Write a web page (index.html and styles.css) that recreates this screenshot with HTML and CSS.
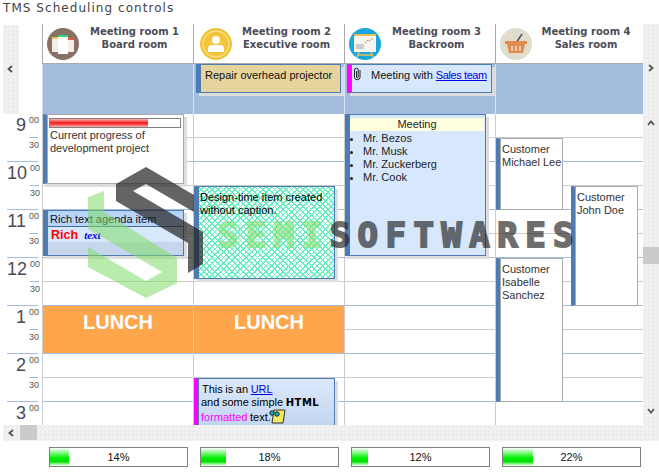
FILE: index.html
```html
<!DOCTYPE html>
<html lang="en">
<head>
  <meta charset="UTF-8">
  <title>TMS Scheduling controls</title>
  <link rel="stylesheet" href="styles.css">
</head>
<body>
  <h1 class="title">TMS Scheduling controls</h1>

  <div class="planner">
    <div class="strip strip-left">
      <svg class="arrow" viewBox="0 0 8 8"><path d="M6 1 L2.500 4 L6 7"/></svg>
    </div>
    <div class="corner"></div>

    <div class="room">
      <svg class="room-icon" viewBox="0 0 32 32">
        <circle cx="16" cy="16" r="16" fill="#8a7064"/>
        <rect x="5" y="9" width="8" height="15" fill="#f4efe6"/>
        <rect x="5" y="9" width="8" height="2" fill="#e8c65a"/>
        <rect x="20" y="10" width="7" height="14" fill="#f4efe6"/>
        <rect x="20" y="10" width="7" height="2" fill="#e0603c"/>
        <rect x="11" y="7" width="10" height="19" fill="#fff"/>
        <rect x="11" y="7" width="10" height="2" fill="#35d07a"/>
      </svg>
      <div class="room-name">Meeting room 1<br>Board room</div>
    </div>
    <div class="room">
      <svg class="room-icon room-icon-2" viewBox="0 0 32 32">
        <circle cx="16" cy="16" r="16" fill="#f2c53c"/>
        <circle cx="16" cy="16" r="13" fill="none" stroke="#f9e7a8" stroke-width="1"/>
        <circle cx="16" cy="12" r="4" fill="#fff"/>
        <path d="M8 24 V21 Q8 17 12 17 H20 Q24 17 24 21 V24 Z" fill="#fff"/>
      </svg>
      <div class="room-name">Meeting room 2<br>Executive room</div>
    </div>
    <div class="room">
      <svg class="room-icon" viewBox="0 0 32 32">
        <circle cx="16" cy="16" r="16" fill="#19a6df"/>
        <path d="M10 24 L8 29 M22 24 L24 29 M8 27 H24" stroke="#e9bd55" stroke-width="1.500" fill="none"/>
        <rect x="5" y="8" width="22" height="16" fill="#f7f7f2"/>
        <rect x="5" y="6" width="22" height="2" fill="#e9bd55"/>
        <rect x="7" y="16" width="8" height="5" fill="#c9ccd0"/>
        <path d="M16 15 L19 12 L21 13 L24 10" stroke="#e0564c" stroke-width="1" stroke-dasharray="1.500 1" fill="none"/>
      </svg>
      <div class="room-name">Meeting room 3<br>Backroom</div>
    </div>
    <div class="room">
      <svg class="room-icon" viewBox="0 0 32 32">
        <circle cx="16" cy="16" r="16" fill="#e1ddcd"/>
        <path d="M16 15 L22 6" stroke="#4a5160" stroke-width="1.500"/>
        <path d="M5 13 H27 V16 H5 Z M7 16 H25 L23 25 H9 Z" fill="#e08a4e"/>
        <path d="M12 18 V23 M16 18 V23 M20 18 V23" stroke="#f3e3d0" stroke-width="1.500"/>
      </svg>
      <div class="room-name">Meeting room 4<br>Sales room</div>
    </div>

    <div class="strip strip-right">
      <svg class="arrow arrow-next" viewBox="0 0 8 8"><path d="M2 1 L5.500 4 L2 7"/></svg>
      <svg class="arrow arrow-up" viewBox="0 0 8 8"><path d="M1 6 L4 2.500 L7 6"/></svg>
      <div class="thumb thumb-v"></div>
      <svg class="arrow arrow-down" viewBox="0 0 8 8"><path d="M1 2 L4 5.500 L7 2"/></svg>
    </div>

    <div class="allday"></div>
    <div class="allday">
      <div class="event repair">Repair overhead projector</div>
    </div>
    <div class="allday">
      <div class="event sales">
        <svg class="clip" viewBox="0 0 9 14"><path d="M7 3 V10.500 A2.800 2.800 0 0 1 1.500 10.500 V3 A1.800 1.800 0 0 1 5.200 3 V10 A.8 .8 0 0 1 3.500 10 V4"/></svg>
        <span>Meeting with <a href="#">Sales team</a></span>
      </div>
    </div>
    <div class="allday"></div>

    <div class="axis">
      <div class="hour"><span class="digit">9</span><div class="mins"><span>00</span><span>30</span></div></div>
      <div class="hour"><span class="digit">10</span><div class="mins"><span>00</span><span>30</span></div></div>
      <div class="hour"><span class="digit">11</span><div class="mins"><span>00</span><span>30</span></div></div>
      <div class="hour"><span class="digit">12</span><div class="mins"><span>00</span><span>30</span></div></div>
      <div class="hour"><span class="digit">1</span><div class="mins"><span>00</span><span>30</span></div></div>
      <div class="hour"><span class="digit">2</span><div class="mins"><span>00</span><span>30</span></div></div>
      <div class="hour"><span class="digit">3</span><div class="mins"><span>00</span></div></div>
    </div>

    <div class="day">
      <div class="event progress-item">
        <div class="red-bar"><div class="red-fill"></div></div>
        Current progress of<br>development project
      </div>
      <div class="event rich-item">
        <div class="rich-caption">Rich text agenda item</div>
        <div class="rich-body"><b>Rich</b> <i>text</i></div>
      </div>
      <div class="lunch">LUNCH</div>
    </div>
    <div class="day">
      <div class="event design-item">Design-time item created<br>without caption.</div>
      <div class="lunch">LUNCH</div>
      <div class="event html-item">
        <span class="first-line">This is an <a href="#">URL</a></span><br>
        and some simple <b>HTML</b><br>
        <span class="pink">formatted</span> text.<svg class="note" viewBox="0 0 17 15">
          <path d="M5 1 H16 L14 14 H3 Z" fill="#f6e860" stroke="#333" stroke-width="1"/>
          <circle cx="3" cy="4" r="2.200" fill="#19b5c5" stroke="#123"/>
          <circle cx="8" cy="5" r="2.200" fill="#19b5c5" stroke="#123"/>
        </svg>
      </div>
    </div>
    <div class="day">
      <div class="event meeting-item">
        <div class="meeting-caption">Meeting</div>
        <ul class="people">
          <li>Mr. Bezos</li>
          <li>Mr. Musk</li>
          <li>Mr. Zuckerberg</li>
          <li>Mr. Cook</li>
        </ul>
      </div>
    </div>
    <div class="day">
      <div class="event customer lee">Customer<br>Michael Lee</div>
      <div class="event customer doe">Customer<br>John Doe</div>
      <div class="event customer sanchez">Customer<br>Isabelle<br>Sanchez</div>
    </div>

    <div class="hbar">
      <svg class="arrow" viewBox="0 0 8 8"><path d="M6 1 L2.500 4 L6 7"/></svg>
      <div class="thumb thumb-h"></div>
    </div>
  </div>

  <div class="meters">
    <div class="meter"><div class="meter-fill" style="width: 14%"></div><span>14%</span></div>
    <div class="meter"><div class="meter-fill" style="width: 18%"></div><span>18%</span></div>
    <div class="meter"><div class="meter-fill" style="width: 12%"></div><span>12%</span></div>
    <div class="meter"><div class="meter-fill" style="width: 22%"></div><span>22%</span></div>
  </div>

  <!-- watermark lies over the whole page -->
  <svg class="mark-logo" viewBox="0 0 659 472">
    <polygon class="mark-dark" points="146,167 194,195 194,212 146,184 133,191 203,232 203,264 188,273 188,243 116,201 116,184"/>
    <polygon class="mark-green" points="88,197 104,191 104,212 177,258 177,283 146,298 88,267 88,247 146,281 162,272 88,229"/>
  </svg>
  <div class="mark-text"><span class="mark-semi">SEMI</span><span class="mark-soft">SOFTWARES</span></div>
</body>
</html>
```

FILE: styles.css
```css
/* page */
html, body {
  margin: 0;
  background: #fff;
}

body {
  position: relative;
  width: 659px;
  height: 472px;
  overflow: hidden;
  font-family: "Liberation Sans", Arial, sans-serif;
  font-size: 11px;
  line-height: 13px;
  color: #111;
}

a {
  color: #0000ee;
}

.title {
  margin: 0;
  padding-left: 3px;
  height: 24px;
  font-family: "DejaVu Sans", Verdana, sans-serif;
  font-size: 12px;
  font-weight: normal;
  line-height: 17px;
  letter-spacing: 1.050px;
  color: #444;
}

/* planner grid */
.planner {
  display: grid;
  grid-template-columns: 16px 23px 151px 151px 151px 148px 16px;
  grid-template-rows: 40px 50px 311px 16px;
  margin-left: 3px;
  width: 656px;
}

.strip,
.hbar {
  background-color: #f1f1f1;
  background-image: radial-gradient(#ebebeb 1px, transparent 1px);
  background-size: 4px 4px;
}

.strip-left {
  grid-row: 1 / 3;
  margin-top: 1px;
  padding: 40px 0 0 3px;
}

.strip-right {
  grid-row: 1 / 4;
  grid-column: 7;
  display: flex;
  flex-direction: column;
  align-items: flex-start;
  padding-left: 4px;
}

.corner {
  grid-row: 1 / 3;
}

.arrow {
  display: block;
  width: 8px;
  height: 8px;
  flex: none;
}

.arrow path {
  fill: none;
  stroke: #555;
  stroke-width: 1.800;
}

.arrow-next {
  margin-top: 40px;
}

.arrow-up {
  margin-top: 47px;
}

.arrow-down {
  margin-top: 143px;
}

.thumb {
  background: #cbcbcb;
}

.thumb-v {
  width: 16px;
  height: 17px;
  margin: 120px 0 0 -4px;
  flex: none;
}

.thumb-h {
  width: 17px;
  height: 15px;
}

.hbar {
  grid-column: 1 / 8;
  display: flex;
  gap: 5px;
  padding-left: 4px;
  align-items: flex-start;
}

.hbar .arrow {
  margin-top: 4px;
}

/* header */
.room {
  display: flex;
  align-items: center;
  box-sizing: border-box;
  border-left: 1px solid #aaa;
  border-bottom: 1px solid #aaa;
  padding: 0 3px 0 4px;
}

.room-icon {
  width: 32px;
  height: 32px;
  flex: none;
}

.room-icon-2 {
  margin-left: 2px;
}

.room-name {
  flex: 1;
  margin-top: -12px;
  text-align: center;
  font-family: "DejaVu Sans", Verdana, sans-serif;
  font-size: 10px;
  font-weight: bold;
  line-height: 13px;
  color: #4c4c58;
}

/* all day band */
.allday {
  box-sizing: border-box;
  padding-left: 2px;
  background: #a4bddf;
  border-left: 1px solid #d6e2f2;
}

/* time axis */
.axis {
  grid-column: 1 / 3;
  overflow: hidden;
}

.hour {
  display: flex;
  justify-content: space-between;
  box-sizing: border-box;
  height: 48px;
  width: 31px;
  margin-left: 4px;
  border-bottom: 1px solid #a4bddf;
}

.digit {
  flex: 1;
  padding-right: 3px;
  text-align: right;
  font-size: 18px;
  line-height: 23px;
  color: #4a4a58;
}

.mins {
  display: flex;
  flex-direction: column;
  width: 9px;
}

.mins span {
  box-sizing: border-box;
  height: 24px;
  padding-top: 3px;
  font-size: 9px;
  line-height: 9px;
  color: #555;
}

.mins span:first-child {
  padding-top: 2px;
  border-bottom: 1px solid #a4bddf;
}

/* day columns */
.day {
  position: relative;
  overflow: hidden;
  border-left: 1px solid #ccc;
  background: repeating-linear-gradient(
    #fff 0, #fff 23px, #ccc 23px, #ccc 24px,
    #fff 24px, #fff 47px, #a4bddf 47px, #a4bddf 48px
  );
}

.lunch {
  position: absolute;
  left: 0;
  top: 191px;
  width: 150px;
  height: 48px;
  background: #ffa64d;
  border-top: 1px solid #a4bddf;
  box-sizing: border-box;
  text-align: center;
  font-size: 20px;
  font-weight: bold;
  line-height: 33px;
  color: #fff;
}

/* events */
.event {
  box-sizing: border-box;
  border: 1px solid #4f7bb3;
  border-left: 4px solid #4f7bb3;
  box-shadow: inset 1px 0 0 #4f7bb3, 3px 3px 0 #ddd;
  padding: 3px 2px 0 3px;
}

.day .event {
  position: absolute;
}

.repair {
  width: 145px;
  height: 29px;
  padding: 4px 0 0 5px;
  background: #e5d59d;
}

.sales {
  display: flex;
  gap: 9px;
  width: 145px;
  height: 29px;
  padding: 2px 0 0 2px;
  border-left-color: #ff00ff;
  background: #d7e8fc;
  white-space: nowrap;
}

.sales span {
  margin-top: 2px;
}

.sales a {
  letter-spacing: -0.400px;
}

.clip {
  width: 9px;
  height: 14px;
  flex: none;
  fill: none;
  stroke: #222;
  stroke-width: 1;
}

.progress-item {
  left: 0;
  top: 0;
  width: 141px;
  height: 70px;
  background: #fff;
  border-color: #aaa #aaa #aaa #4f7bb3;
  box-shadow: inset 1px 0 0 #aaa, 3px 3px 0 #ddd;
  color: #333;
}

.red-bar {
  box-sizing: border-box;
  height: 10px;
  margin: 0 0 1px -1px;
  border: 1px solid #808080;
  background: #fff;
}

.red-fill {
  width: 75%;
  height: 100%;
  background: linear-gradient(#ffb0b0, #f01818 50%, #ffb0b0);
}

.rich-item {
  left: 0;
  top: 96px;
  width: 141px;
  height: 46px;
  padding: 0;
  background: #d7e8fc;
}

.rich-caption {
  box-sizing: border-box;
  margin-left: 1px;
  padding: 2px 0 0 2px;
  height: 16px;
  background: #b7d4fb;
  border-bottom: 1px solid #4f6a90;
}

.rich-body {
  box-sizing: border-box;
  margin-left: 1px;
  height: 15px;
  padding: 1px 0 0 3px;
  line-height: 14px;
}

.rich-body b {
  font-size: 12.500px;
  color: #ff0000;
}

.rich-body i {
  margin-left: 3px;
  font-family: "Liberation Serif", serif;
  font-weight: bold;
  color: #0000ee;
}

.rich-item::after {
  content: "";
  display: block;
  height: 13px;
  margin-left: 1px;
  background: #c6d6ec;
}

.design-item {
  left: 0;
  top: 72px;
  width: 141px;
  height: 93px;
  padding: 4px 0 0 2px;
  background-color: #fff;
  background-image:
    repeating-linear-gradient(45deg, #66eec0 0, #66eec0 1.200px, transparent 1.200px, transparent 4px),
    repeating-linear-gradient(-45deg, #66eec0 0, #66eec0 1.200px, transparent 1.200px, transparent 4px);
  color: #000;
}

.html-item {
  left: 0;
  top: 264px;
  width: 141px;
  height: 70px;
  padding: 4px 0 0 3px;
  border-left-color: #ff00ff;
  background: linear-gradient(#dce9fb, #c0d4ef 50px);
  color: #000;
  word-spacing: -0.500px;
}

.first-line {
  margin-left: 1px;
}

.html-item b {
  font-family: "DejaVu Sans", sans-serif;
  font-size: 10px;
  letter-spacing: 0.500px;
}

.pink {
  color: #ff00ff;
}

.note {
  display: inline-block;
  width: 17px;
  height: 15px;
  margin-left: -2px;
  vertical-align: -3px;
}

.meeting-item {
  left: 0;
  top: 0;
  width: 141px;
  height: 142px;
  padding: 3px 1px 0 1px;
  background: #d7e8fc;
}

.meeting-caption {
  height: 13px;
  background: #ffffe0;
  text-align: center;
  color: #222;
}

.people {
  margin: 0;
  padding: 1px 0 0 13px;
  color: #222;
}

.customer {
  padding: 4px 0 0 2px;
  background: #fff;
  border-color: #aaa #aaa #aaa #4f7bb3;
  box-shadow: inset 1px 0 0 #aaa;
  color: #333;
}

.lee {
  left: 0;
  top: 24px;
  width: 67px;
  height: 72px;
}

.doe {
  left: 75px;
  top: 72px;
  width: 67px;
  height: 120px;
}

.sanchez {
  left: 0;
  top: 144px;
  width: 67px;
  height: 144px;
}

/* meters */
.meters {
  display: flex;
  gap: 12px;
  margin: 6px 0 0 49px;
}

.meter {
  display: grid;
  box-sizing: border-box;
  width: 139px;
  height: 20px;
  border: 1px solid #808080;
  text-align: center;
  line-height: 18px;
}

.meter > * {
  grid-area: 1 / 1;
}

.meter-fill {
  background: linear-gradient(#fff, #00f000 55%, #00e000 75%, #fff);
}

/* watermark */
.mark-logo {
  position: absolute;
  left: 0;
  top: 0;
  width: 659px;
  height: 472px;
  pointer-events: none;
}

.mark-dark {
  fill: #222;
  opacity: 0.7;
}

.mark-green {
  fill: #7fdc68;
  opacity: 0.55;
}

.mark-text {
  position: absolute;
  left: 218px;
  top: 215px;
  font-family: "DejaVu Sans Mono", monospace;
  font-size: 34px;
  font-weight: bold;
  line-height: 40px;
  letter-spacing: 7.450px;
  white-space: nowrap;
  -webkit-text-stroke: 2px;
}

.mark-semi {
  color: #7fdc68;
  opacity: 0.55;
}

.mark-soft {
  color: #222;
  opacity: 0.65;
}
```
